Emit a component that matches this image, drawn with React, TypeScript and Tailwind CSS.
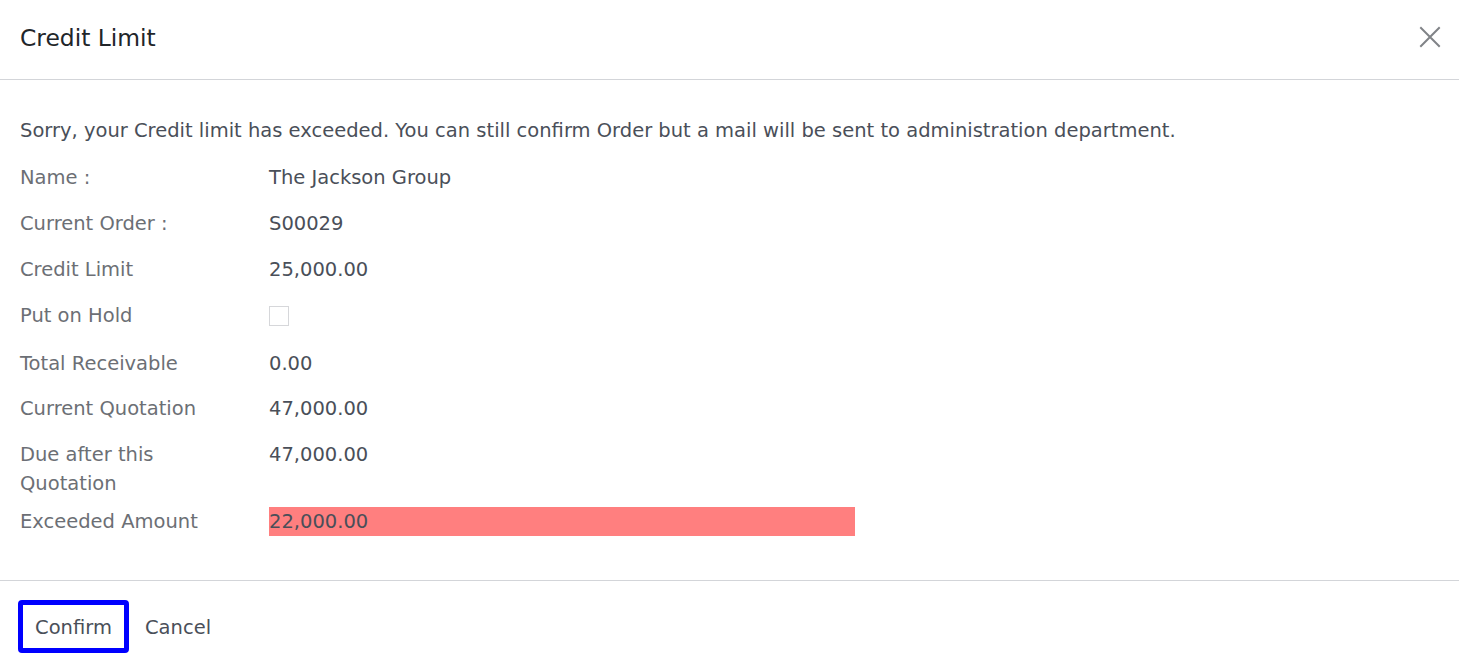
const rows: { label: string; value?: string; kind?: "check" | "danger"; mt: string }[] = [
  { label: "Name :", value: "The Jackson Group", mt: "mt-[18px]" },
  { label: "Current Order :", value: "S00029", mt: "mt-[17px]" },
  { label: "Credit Limit", value: "25,000.00", mt: "mt-[17px]" },
  { label: "Put on Hold", kind: "check", mt: "mt-[17px]" },
  { label: "Total Receivable", value: "0.00", mt: "mt-[19px]" },
  { label: "Current Quotation", value: "47,000.00", mt: "mt-[16px]" },
  { label: "Due after this Quotation", value: "47,000.00", mt: "mt-[17px]" },
  { label: "Exceeded Amount", value: "22,000.00", kind: "danger", mt: "mt-[9px]" },
];

const CloseIcon = () => (
  <svg width="22" height="22" viewBox="0 0 22 22" fill="none">
    <path d="M2 2L20 20M20 2L2 20" stroke="#808387" strokeWidth="2" strokeLinecap="square" />
  </svg>
);

const App = () => {
  return (
    <div
      className="w-[1459px] h-[670px] bg-white overflow-hidden flex flex-col"
      style={{ fontFamily: '"DejaVu Sans", sans-serif' }}
    >
      <header className="h-[80px] shrink-0 flex items-center justify-between pl-5 pr-[18px] border-b border-[#d3d5d9]">
        <h1 className="text-[23.4px] text-[#212529] leading-none pb-[2px]">Credit Limit</h1>
        <button className="pb-[5px]">
          <CloseIcon />
        </button>
      </header>

      <main className="flex-1 px-5 pt-[36px] text-[19.5px] leading-[29px]">
        <p className="text-[#4a4f59]">
          Sorry, your Credit limit has exceeded. You can still confirm Order but a mail will be sent to
          administration department.
        </p>
        {rows.map((r) => (
          <div key={r.label} className={`grid grid-cols-[229px_1fr] gap-x-5 ${r.mt}`}>
            <div className="text-[#6c6f75]">{r.label}</div>
            {r.kind === "check" ? (
              <div className="h-[29px] flex items-center">
                <span className="w-[20px] h-[20px] border border-[#d6d7da] bg-white" />
              </div>
            ) : r.kind === "danger" ? (
              <div className="w-[586px] bg-[#ff7f7f] text-[#4a4f59]">{r.value}</div>
            ) : (
              <div className="text-[#4a4f59]">{r.value}</div>
            )}
          </div>
        ))}
      </main>

      <footer className="h-[90px] shrink-0 border-t border-[#d3d5d9] flex items-start gap-4 pl-[18px] pt-[19px] text-[19.5px]">
        <button className="w-[111px] h-[53px] border-[5px] border-[#0000ff] rounded-[4px] text-[#4a4f59] pt-[2px]">
          Confirm
        </button>
        <button className="h-[53px] text-[#4a4f59] pt-[2px]">Cancel</button>
      </footer>
    </div>
  );
};

export default App;
